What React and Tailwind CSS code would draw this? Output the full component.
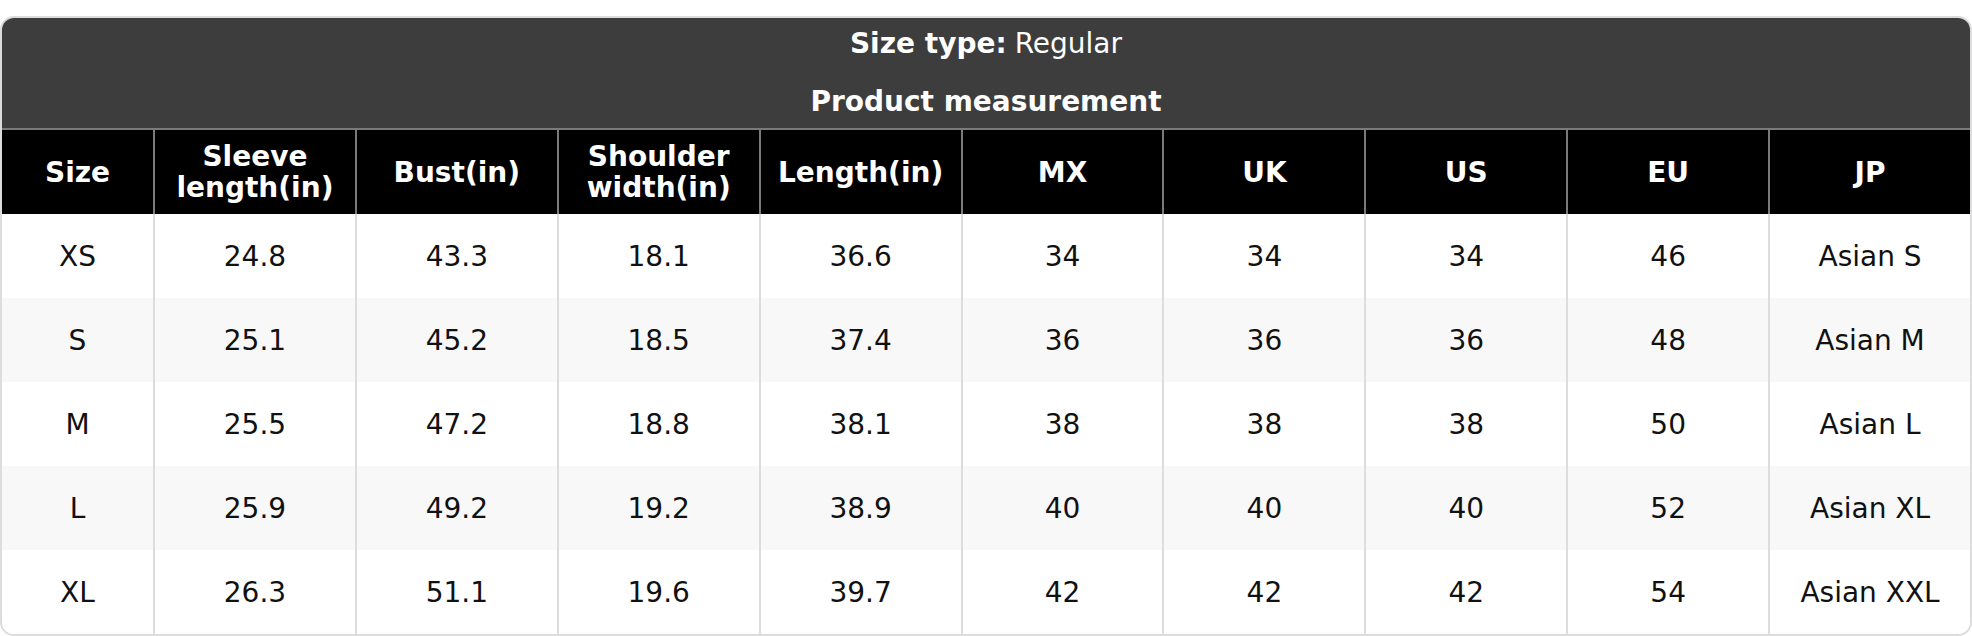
const columns = ['Size', 'Sleeve length(in)', 'Bust(in)', 'Shoulder width(in)', 'Length(in)', 'MX', 'UK', 'US', 'EU', 'JP']

const headerLabels = [
  'Size',
  ['Sleeve', 'length(in)'],
  'Bust(in)',
  ['Shoulder', 'width(in)'],
  'Length(in)',
  'MX',
  'UK',
  'US',
  'EU',
  'JP'
]

const rows = [
  ['XS', '24.8', '43.3', '18.1', '36.6', '34', '34', '34', '46', 'Asian S'],
  ['S', '25.1', '45.2', '18.5', '37.4', '36', '36', '36', '48', 'Asian M'],
  ['M', '25.5', '47.2', '18.8', '38.1', '38', '38', '38', '50', 'Asian L'],
  ['L', '25.9', '49.2', '19.2', '38.9', '40', '40', '40', '52', 'Asian XL'],
  ['XL', '26.3', '51.1', '19.6', '39.7', '42', '42', '42', '54', 'Asian XXL']
]

function App() {
  return (
    <div className="w-[1972px] h-[636px] bg-white pt-4" style={{ fontFamily: '"DejaVu Sans", sans-serif' }}>
      <div className="rounded-[14px] overflow-hidden border-2 border-[#dcdcdc] text-[28px]">
        {/* Title */}
        <div className="bg-[#3d3d3d] text-white border-b-2 border-[#7a7a7a]">
          <div className="h-[52px] flex items-center justify-center">
            <span className="font-bold">Size type:</span>
            <span className="ml-2">Regular</span>
          </div>
          <div className="h-[58px] pt-[5px] flex items-center justify-center font-bold">
            Product measurement
          </div>
        </div>

        {/* Column headers */}
        <div className="grid grid-cols-[151px_repeat(9,minmax(0,1fr))] bg-black text-white font-bold h-[84px]">
          {headerLabels.map((label, i) => (
            <div
              key={columns[i]}
              className={`flex flex-col items-center justify-center text-center leading-[31px] ${i > 0 ? 'border-l-2 border-[#7a7a7a]' : ''}`}
            >
              {Array.isArray(label) ? label.map((line) => <span key={line}>{line}</span>) : label}
            </div>
          ))}
        </div>

        {/* Body */}
        {rows.map((row, r) => (
          <div
            key={row[0]}
            className={`grid grid-cols-[151px_repeat(9,minmax(0,1fr))] h-[84px] text-[#111] ${r % 2 === 1 ? 'bg-[#f8f8f8]' : 'bg-white'}`}
          >
            {row.map((cell, i) => (
              <div
                key={i}
                className={`flex items-center justify-center pt-px ${i > 0 ? 'border-l-2 border-[#dcdcdc]' : ''}`}
              >
                {cell}
              </div>
            ))}
          </div>
        ))}
      </div>
    </div>
  )
}

export default App
